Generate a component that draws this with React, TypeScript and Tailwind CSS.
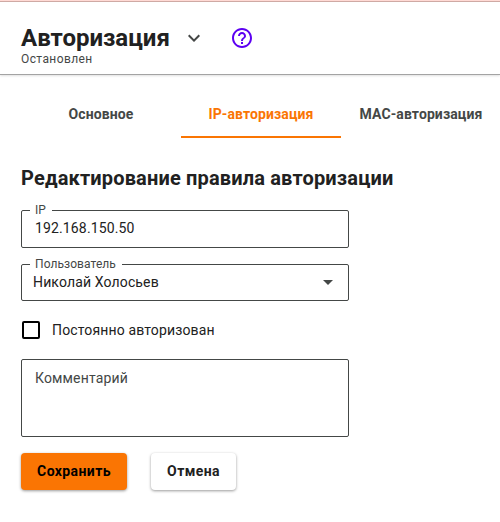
import type { ReactNode } from "react";

function Header() {
  return (
    <header className="h-[75px] border-b border-[#a3a3a3] bg-white shadow-[0_1px_2px_rgba(0,0,0,0.12)]">
      <div className="h-[2px] border-b border-[#cfa9a4] bg-[#ffdad5]" />
      <div className="flex h-8 items-center pl-[21px] mt-5">
        <h1 className="w-[149px] whitespace-nowrap text-[24px] leading-8 font-bold text-[#212121]">Авторизация</h1>
        <svg className="ml-3 size-6" viewBox="0 0 24 24" fill="#444746">
          <path d="M7.41 8.59 12 13.17l4.59-4.58L18 10l-6 6-6-6z" />
        </svg>
        <svg className="ml-6 size-6" viewBox="0 0 24 24" fill="#5c00f2">
          <path d="M11 18h2v-2h-2v2zm1-16C6.48 2 2 6.48 2 12s4.48 10 10 10 10-4.48 10-10S17.52 2 12 2zm0 18c-4.41 0-8-3.59-8-8s3.59-8 8-8 8 3.59 8 8-3.59 8-8 8zm0-14c-2.21 0-4 1.79-4 4h2c0-1.1.9-2 2-2s2 .9 2 2c0 2-3 1.75-3 5h2c0-2.25 3-2.5 3-5 0-2.21-1.79-4-4-4z" />
        </svg>
      </div>
      <p className="pl-[21px] -mt-[3px] text-[12px] leading-4 tracking-[0.4px] text-[#444746]">Остановлен</p>
    </header>
  );
}

function Tab({ children, active = false }: { children: ReactNode; active?: boolean }) {
  return (
    <button
      className={`h-12 w-40 shrink-0 border-b-2 pt-[2px] text-[14px] font-bold tracking-[0.1px] whitespace-nowrap ${
        active ? "border-[#fa7503] text-[#fa7503]" : "border-transparent text-[#444746]"
      }`}
    >
      {children}
    </button>
  );
}

function Field({ label, className, children }: { label: string; className: string; children: ReactNode }) {
  return (
    <div className={`relative flex w-[328px] items-center rounded-[2px] border border-[#444746] ${className}`}>
      <span className="absolute -top-[9px] left-2 bg-white pr-[6px] pl-[5px] text-[12px] leading-4 tracking-[0.07px] text-[#444746]">
        {label}
      </span>
      {children}
    </div>
  );
}

export default function App() {
  return (
    <div className="h-[522px] w-[500px] overflow-hidden bg-white font-[Roboto,sans-serif] text-[#212121]">
      <Header />
      <nav className="mt-[15px] ml-[21px] flex">
        <Tab>Основное</Tab>
        <Tab active>IP-авторизация</Tab>
        <Tab>MAC-авторизация</Tab>
      </nav>
      <main className="pl-[21px]">
        <h2 className="mt-[26px] text-[20px] leading-7 font-bold tracking-[0.16px] whitespace-nowrap">Редактирование правила авторизации</h2>
        <Field label="IP" className="mt-[18px] h-[38px] pb-[2px] pl-[13px]">
          <span className="text-[14px] leading-5 tracking-[0.14px]">192.168.150.50</span>
        </Field>
        <Field label="Пользователь" className="mt-4 h-[37px] pr-[15px] pl-[11px]">
          <span className="flex-1 pb-[2px] text-[14px] leading-5 tracking-[0.14px]">Николай Холосьев</span>
          <svg width="10" height="5" viewBox="0 0 10 5" fill="#444746">
            <path d="M0 0h10L5 5z" />
          </svg>
        </Field>
        <label className="mt-[19px] ml-px flex h-5 items-center">
          <span className="size-[18px] rounded-[2px] border-2 border-black" />
          <span className="ml-3 text-[14px] leading-5 tracking-[0.14px]">Постоянно авторизован</span>
        </label>
        <div className="mt-[19px] h-[78px] w-[328px] rounded-[2px] border border-[#444746] pt-2 pl-[13px] text-[14px] leading-5 tracking-[0.14px] text-[#444746]">
          Комментарий
        </div>
        <div className="mt-4 flex gap-6">
          <button className="h-[37px] w-[106px] rounded-[4px] bg-[#fa7503] text-[14px] font-bold tracking-[0.4px] text-black shadow-[0_1px_3px_rgba(0,0,0,0.4)]">
            Сохранить
          </button>
          <button className="h-[37px] w-[85px] rounded-[4px] bg-white text-[14px] font-bold tracking-[0.4px] shadow-[0_1px_3px_rgba(0,0,0,0.4)]">
            Отмена
          </button>
        </div>
      </main>
    </div>
  );
}
